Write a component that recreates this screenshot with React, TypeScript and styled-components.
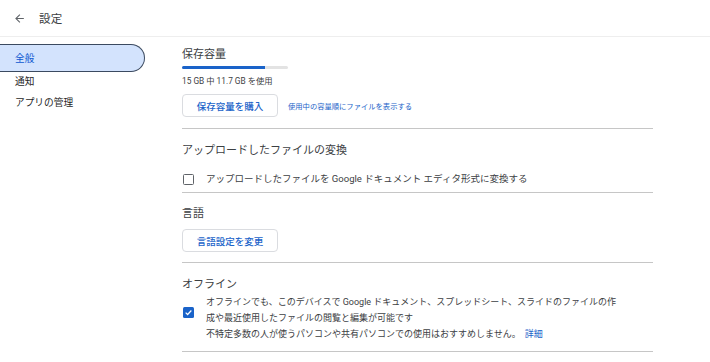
import React from "react";
import styled, { createGlobalStyle } from "styled-components";

const Global = createGlobalStyle`
  html, body { margin: 0; padding: 0; background: #fff; }
  body { font-family: Roboto, "Noto Sans CJK JP", sans-serif; color: #3c4043; }
  * { box-sizing: border-box; }
`;

const Page = styled.div`
  width: 710px;
  height: 362px;
  overflow: hidden;
  display: flex;
  flex-direction: column;
`;

const Header = styled.header`
  height: 37px;
  border-bottom: 1px solid #eeeeee;
  display: flex;
  align-items: center;
  padding-left: 13px;
  gap: 13px;
`;

const BackIcon = styled.svg`
  width: 13px;
  height: 13px;
  fill: #5f6368;
`;

const HeaderTitle = styled.h1`
  margin: 0;
  font-size: 11.5px;
  font-weight: 400;
  color: #3c4043;
  letter-spacing: 0.3px;
`;

const Body = styled.div`
  display: grid;
  grid-template-columns: 145px 471px;
  column-gap: 37px;
`;

const Sidebar = styled.nav`
  padding-top: 7px;
  display: flex;
  flex-direction: column;
`;

const NavItem = styled.div<{ $active?: boolean }>`
  height: ${(p) => (p.$active ? "28px" : "21px")};
  margin-bottom: ${(p) => (p.$active ? "-2px" : "0")};
  display: flex;
  align-items: center;
  padding-left: 15px;
  font-size: 9.7px;
  color: ${(p) => (p.$active ? "#0b57d0" : "#1f1f1f")};
  background: ${(p) => (p.$active ? "#d3e3fd" : "transparent")};
  border: ${(p) => (p.$active ? "1.5px solid #3b4a60" : "none")};
  border-left: none;
  border-radius: 0 14px 14px 0;
`;

const Main = styled.main`
  display: flex;
  flex-direction: column;
`;

const Section = styled.section<{ $top?: number; $bottom?: number }>`
  padding-top: ${(p) => p.$top ?? 13}px;
  padding-bottom: ${(p) => p.$bottom ?? 12}px;
  border-bottom: 1.5px solid #c6c6c6;
  display: flex;
  flex-direction: column;
  align-items: flex-start;
`;

const Title = styled.h2`
  margin: 0;
  font-size: 11px;
  line-height: 16px;
  font-weight: 400;
  color: #3c4043;
`;

const Track = styled.div`
  margin-top: 3px;
  width: 106px;
  height: 3px;
  background: #e3e3e3;
  border-radius: 2px;
  overflow: hidden;
`;

const Fill = styled.div`
  height: 100%;
  background: #1a63c9;
`;

const Small = styled.div`
  margin-top: 6px;
  font-size: 8.3px;
  line-height: 12px;
  color: #3c4043;
`;

const ButtonRow = styled.div<{ $top?: number }>`
  margin-top: ${(p) => p.$top ?? 8}px;
  display: flex;
  align-items: center;
  gap: 10px;
`;

const OutlineButton = styled.button`
  width: 96px;
  height: 23px;
  border: 1px solid #dadce0;
  border-radius: 4px;
  background: #fff;
  color: #1a63c9;
  font-family: Roboto, "Noto Sans CJK JP", sans-serif;
  font-size: 9.5px;
  font-weight: 500;
  padding: 0;
  cursor: pointer;
`;

const SmallLink = styled.a`
  font-size: 7.3px;
  color: #1a63c9;
  text-decoration: none;
`;

const CheckRow = styled.label<{ $top?: number; $size?: number }>`
  margin-top: ${(p) => p.$top ?? 9}px;
  display: flex;
  align-items: flex-start;
  gap: 12px;
  font-size: ${(p) => p.$size ?? 9.5}px;
  line-height: 16px;
  color: #3c4043;
`;

const Box = styled.span<{ $checked?: boolean; $offset?: number }>`
  flex: none;
  width: 11px;
  height: 11px;
  margin-left: 1px;
  margin-top: ${(p) => p.$offset ?? 2}px;
  border-radius: 1.5px;
  border: ${(p) => (p.$checked ? "none" : "1.5px solid #5f6368")};
  background: ${(p) => (p.$checked ? "#1a63c9" : "#fff")};
  display: flex;
  align-items: center;
  justify-content: center;
`;

const Tick = styled.svg`
  width: 9px;
  height: 9px;
  stroke: #fff;
  fill: none;
  stroke-width: 1.6;
`;

const LinkText = styled.a`
  color: #1a63c9;
  text-decoration: none;
  margin-left: 4px;
`;

export default function App() {
  return (
    <Page>
      <Global />
      <Header>
        <BackIcon viewBox="0 0 24 24">
          <path d="M20 11H7.83l5.59-5.59L12 4l-8 8 8 8 1.41-1.41L7.83 13H20v-2z" />
        </BackIcon>
        <HeaderTitle>設定</HeaderTitle>
      </Header>
      <Body>
        <Sidebar>
          <NavItem $active>全般</NavItem>
          <NavItem>通知</NavItem>
          <NavItem>アプリの管理</NavItem>
        </Sidebar>
        <Main>
          <Section $top={10} $bottom={11}>
            <Title>保存容量</Title>
            <Track>
              <Fill style={{ width: `${(11.7 / 15) * 100}%` }} />
            </Track>
            <Small>15 GB 中 11.7 GB を使用</Small>
            <ButtonRow $top={7}>
              <OutlineButton>保存容量を購入</OutlineButton>
              <SmallLink>使用中の容量順にファイルを表示する</SmallLink>
            </ButtonRow>
          </Section>
          <Section $top={14} $bottom={5}>
            <Title>アップロードしたファイルの変換</Title>
            <CheckRow $top={12}>
              <Box $offset={3} />
              <span>アップロードしたファイルを Google ドキュメント エディタ形式に変換する</span>
            </CheckRow>
          </Section>
          <Section $top={13} $bottom={10}>
            <Title>言語</Title>
            <ButtonRow $top={7}>
              <OutlineButton>言語設定を変更</OutlineButton>
            </ButtonRow>
          </Section>
          <Section $top={14} $bottom={9}>
            <Title>オフライン</Title>
            <CheckRow $top={1} $size={9}>
              <Box $checked $offset={13}>
                <Tick viewBox="0 0 12 12">
                  <path d="M2.2 6.2 L4.8 8.7 L9.8 3.3" />
                </Tick>
              </Box>
              <span>
                オフラインでも、このデバイスで Google ドキュメント、スプレッドシート、スライドのファイルの作
                <br />
                成や最近使用したファイルの閲覧と編集が可能です
                <br />
                不特定多数の人が使うパソコンや共有パソコンでの使用はおすすめしません。
                <LinkText>詳細</LinkText>
              </span>
            </CheckRow>
          </Section>
        </Main>
      </Body>
    </Page>
  );
}
